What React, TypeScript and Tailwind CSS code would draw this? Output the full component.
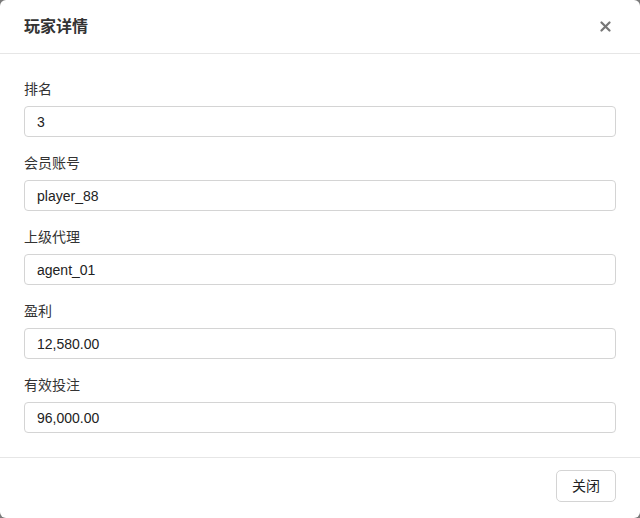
const fields = [
  { label: "排名", value: "3" },
  { label: "会员账号", value: "player_88" },
  { label: "上级代理", value: "agent_01" },
  { label: "盈利", value: "12,580.00" },
  { label: "有效投注", value: "96,000.00" },
];

export default function App() {
  return (
    <div
      className="w-[640px] h-[518px] bg-[#7a7a7a]"
      style={{ fontFamily: '"Liberation Sans", "Noto Sans CJK SC", sans-serif' }}
    >
      <div className="h-full flex flex-col bg-white rounded-[6px] overflow-hidden">
        {/* header */}
        <div className="h-[54px] shrink-0 px-6 flex items-center justify-between border-b border-[#e6e6e6]">
          <h2 className="text-[16px] font-semibold text-[#333] pt-px">玩家详情</h2>
          <button type="button" className="w-5 h-5 flex items-center justify-center text-[#777] mr-[1px]">
            <svg width="11" height="11" viewBox="0 0 11 11">
              <path d="M1.5 1.5 L9.5 9.5 M9.5 1.5 L1.5 9.5" stroke="currentColor" strokeWidth="2.2" strokeLinecap="round" />
            </svg>
          </button>
        </div>

        {/* body */}
        <div className="flex-1 px-6 pt-[25px] pb-6 flex flex-col gap-4">
          {fields.map((f) => (
            <div key={f.label}>
              <label className="block h-5 text-sm leading-5 text-[#333] mb-[7px]">{f.label}</label>
              <input
                type="text"
                readOnly
                value={f.value}
                className="w-full h-[31px] px-3 rounded-[4px] border border-[#d4d4d4] text-sm text-[#222] bg-white outline-none"
              />
            </div>
          ))}
        </div>

        {/* footer */}
        <div className="shrink-0 border-t border-[#e6e6e6] px-6 pt-3 pb-4 flex justify-end">
          <button
            type="button"
            className="w-[60px] h-[32px] rounded-[5px] border border-[#d4d4d4] bg-white text-sm text-[#222]"
          >
            关闭
          </button>
        </div>
      </div>
    </div>
  );
}
